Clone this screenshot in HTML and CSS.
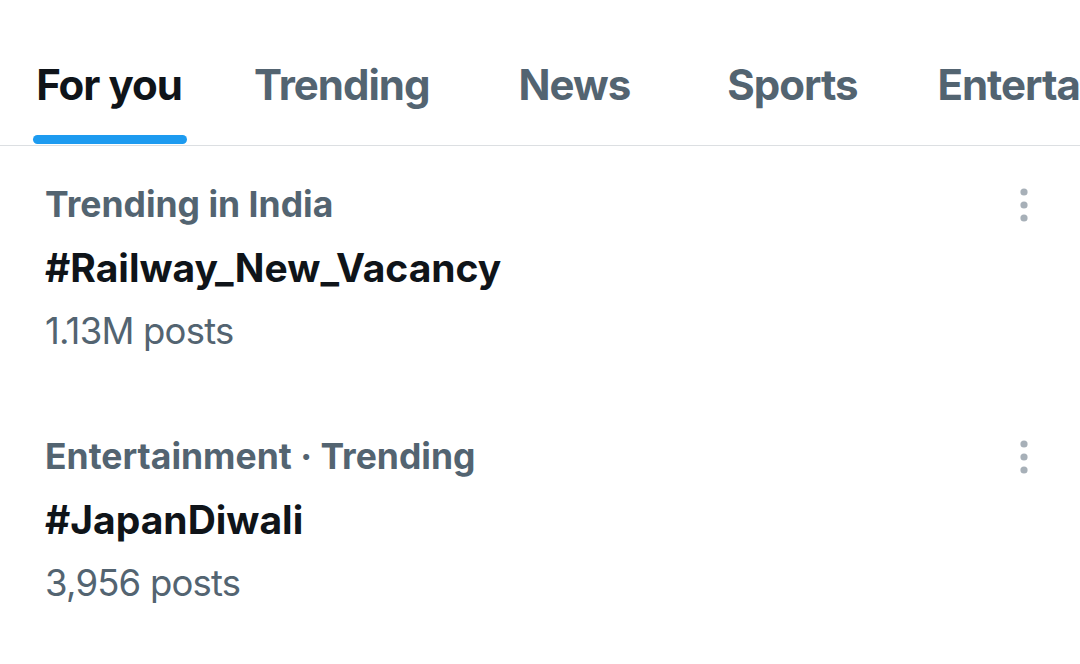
FILE: index.html
```html
<!DOCTYPE html>
<html lang="en">
<head>
    <meta charset="UTF-8">
    <meta name="viewport" content="width=device-width, initial-scale=1.0">
    <title>Explore</title>
    <link rel="stylesheet" href="styles.css">
</head>
<body>
    <!-- Tabs -->
    <nav class="tabs">
        <a class="tab active" href="#"><span class="tab-label">For you</span></a>
        <a class="tab" href="#"><span class="tab-label">Trending</span></a>
        <a class="tab" href="#"><span class="tab-label">News</span></a>
        <a class="tab" href="#"><span class="tab-label">Sports</span></a>
        <a class="tab" href="#"><span class="tab-label">Entertainment</span></a>
    </nav>

    <!-- Trends -->
    <section class="trends">
        <div class="trend">
            <div class="trend-head">
                <span class="trend-context">Trending in India</span>
                <button class="more" aria-label="More">
                    <svg viewBox="0 0 14 44" width="14" height="44">
                        <circle cx="7" cy="9" r="3.6"/>
                        <circle cx="7" cy="22" r="3.6"/>
                        <circle cx="7" cy="35" r="3.6"/>
                    </svg>
                </button>
            </div>
            <div class="trend-name">#Railway_New_Vacancy</div>
            <div class="trend-count">1.13M posts</div>
        </div>

        <div class="trend">
            <div class="trend-head">
                <span class="trend-context">Entertainment · Trending</span>
                <button class="more" aria-label="More">
                    <svg viewBox="0 0 14 44" width="14" height="44">
                        <circle cx="7" cy="9" r="3.6"/>
                        <circle cx="7" cy="22" r="3.6"/>
                        <circle cx="7" cy="35" r="3.6"/>
                    </svg>
                </button>
            </div>
            <div class="trend-name">#JapanDiwali</div>
            <div class="trend-count">3,956 posts</div>
        </div>
    </section>
</body>
</html>
```

FILE: styles.css
```css
body {
    margin: 0;
    background: #fff;
    font-family: 'Inter', 'Noto Sans', sans-serif;
    color: #0f1419;
    overflow: hidden;
}

/* Tabs */
.tabs {
    display: flex;
    padding-left: 0;
    border-bottom: 1px solid #dcdfe2;
    overflow: hidden;
}

.tab {
    flex-shrink: 0;
    min-width: 218px;
    box-sizing: border-box;
    height: 145px;
    padding: 60px 36px 0;
    display: flex;
    justify-content: center;
    text-decoration: none;
    color: #536471;
    font-size: 42px;
    font-weight: 700;
    line-height: 50px;
    letter-spacing: -1px;
}

.tab.active {
    color: #0f1419;
}

.tab-label {
    display: flex;
    flex-direction: column;
    white-space: nowrap;
}

.tab.active .tab-label::after {
    content: "";
    height: 9px;
    margin: 25px -5px 0 -3px;
    border-radius: 5px;
    background: #1d9bf0;
}

/* Trends */
.trend {
    padding: 37px 49px 44px 45px;
}

.trend-head {
    display: flex;
    justify-content: space-between;
    align-items: flex-start;
}

.trend-context {
    font-size: 35.5px;
    line-height: 44px;
    font-weight: 700;
    color: #536471;
}

.more {
    border: none;
    background: none;
    padding: 0;
    display: block;
}

.more svg {
    display: block;
    fill: #a7b0b8;
}

.trend-name {
    margin-top: 16px;
    font-size: 39px;
    line-height: 50px;
    font-weight: 700;
}

.trend-count {
    margin-top: 15px;
    font-size: 36.5px;
    line-height: 46px;
    letter-spacing: -0.8px;
    color: #536471;
}
```
